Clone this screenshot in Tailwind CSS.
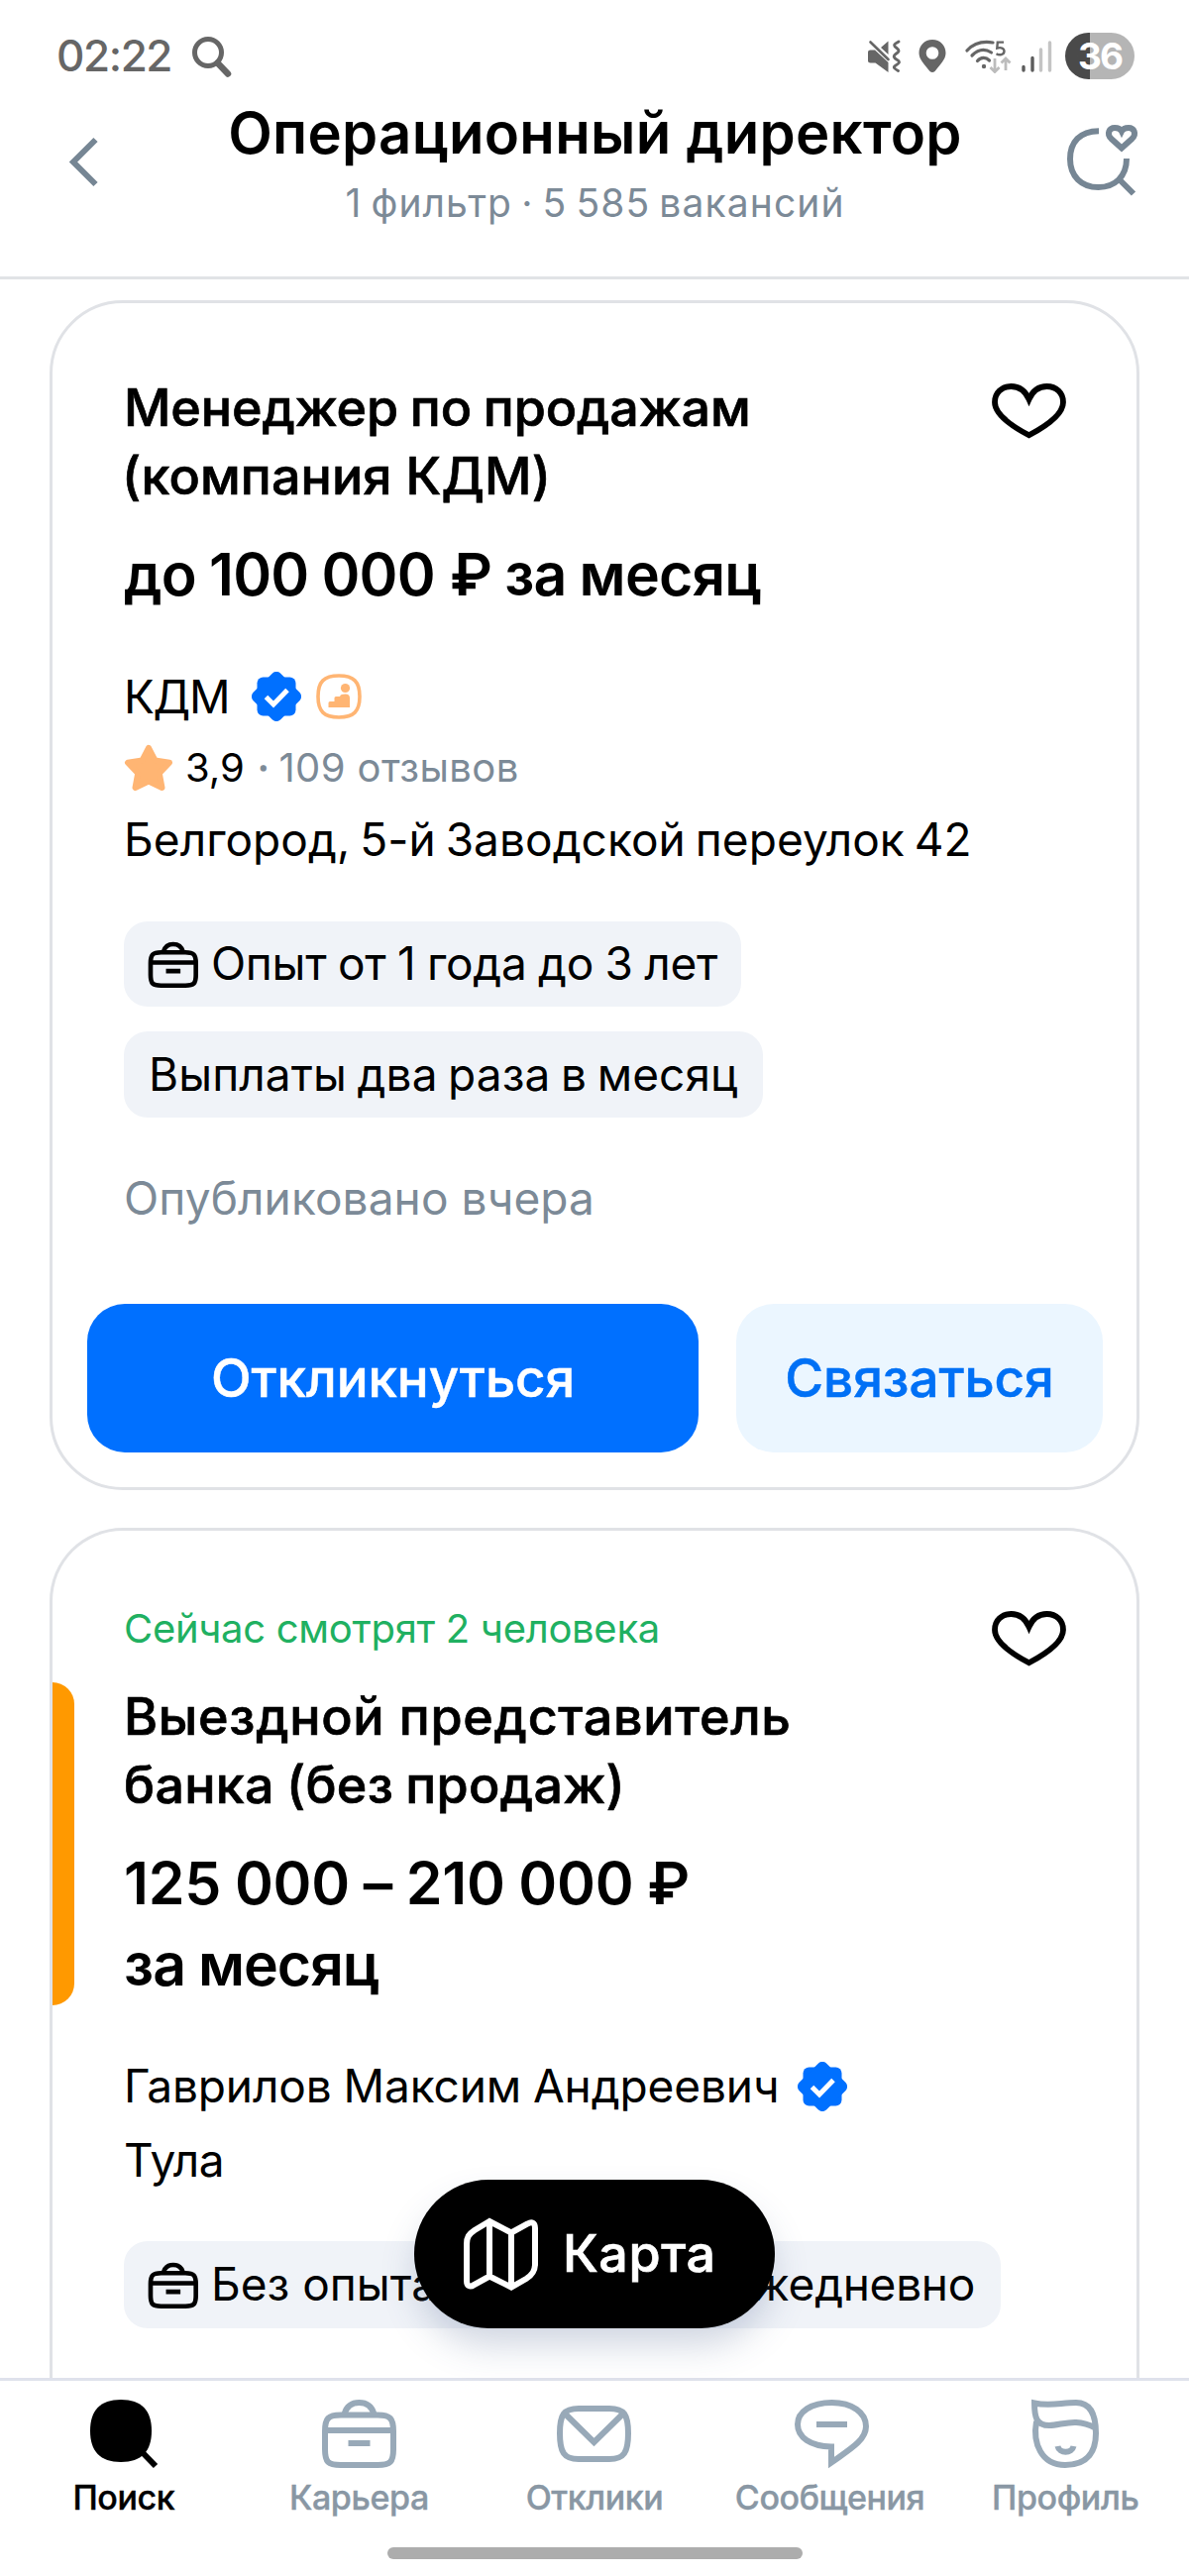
<!DOCTYPE html>
<html lang="ru">
<head>
<meta charset="utf-8">
<title>Операционный директор — вакансии</title>
<script src="https://cdn.jsdelivr.net/npm/@tailwindcss/browser@4"></script>
</head>
<body class="bg-white">
<svg class="hidden">
  <symbol id="briefcase" viewBox="0 0 80 80"><g fill="none" stroke="currentColor"><path d="M25.500 20.500C28 12 33 9 40.500 9S53 12 55.500 20.500"/><path d="M6 38C6 25 9 21.500 22 21.500H59C72 21.500 75 25 75 38V56C75 69 72 72 59 72H22C9 72 6 69 6 56ZM6 37H75M29.500 50H51.500"/></g></symbol>
  <symbol id="heart" viewBox="0 0 75 56"><path d="M37.500 16C34 8 28 3 19.500 3C10 3 3 9.500 3 19C3 31 18 42 37.500 52.300C57 42 72 31 72 19C72 9.500 65 3 55.500 3C47 3 41 8 37.500 16Z" fill="none" stroke="currentColor" stroke-width="5.800"/></symbol>
  <symbol id="verified" viewBox="0 0 50 50"><g fill="#0070ff"><rect x="5.500" y="5.500" width="39" height="39" rx="6"/><rect x="5.500" y="5.500" width="39" height="39" rx="6" transform="rotate(45 25 25)"/></g><path d="M14.500 25.500L22 33L36 18.500" fill="none" stroke="#fff" stroke-width="5"/></symbol>
</svg>

<div class="relative flex h-[2600px] w-[1200px] flex-col overflow-hidden bg-white font-['Inter',sans-serif] text-black">

  <!-- Status bar -->
  <div class="mt-[33px] flex h-[47px] shrink-0 items-center pr-[55px] pl-[57px] text-[#666]">
    <span class="text-[44px] leading-[47px] font-medium tracking-[-1.4px]">02:22</span>
    <svg class="ml-[21px] h-[42px] w-[40px]" viewBox="0 0 40 42" fill="none" stroke="currentColor"><circle cx="16" cy="17" r="13.500" stroke-width="5"/><path d="M25.500 27.500L36 38.500" stroke-width="6.500" stroke-linecap="round"/></svg>
    <div class="ml-auto flex items-center">
      <svg class="h-[33px] w-[33px]" viewBox="0 0 33 33"><path d="M0 12.500Q0 10.500 2.500 10.500H7L20.500 23V33L7.500 23.500H2.500Q0 23.500 0 21.500ZM13 8L20.500 1.500V15Z" fill="currentColor"/><path d="M2.500 2.500L20.500 20" stroke="currentColor" stroke-width="2.600" stroke-linecap="round"/><path d="M31 2C25.500 5 25.500 6 29 8.500S31 12.500 28 14.500S26 18.500 29.500 20.500S31.500 24 28 26S27 29.500 30.500 31.500" fill="none" stroke="currentColor" stroke-width="2.800" stroke-linecap="round"/></svg>
      <svg class="ml-[18px] h-[33px] w-[28px]" viewBox="0 0 28 33"><path fill-rule="evenodd" fill="currentColor" d="M14 0C22 0 27.500 6 27.500 13.500C27.500 20 22 25 16.500 32Q14 34 11.500 32C6 25 .5 20 .5 13.500C.5 6 6 0 14 0ZM14 7.200A6.300 6.300 0 1 0 14 19.800A6.300 6.300 0 1 0 14 7.200Z"/></svg>
      <svg class="ml-[19px] h-[34px] w-[48px]" viewBox="0 0 48 34"><g fill="none" stroke="currentColor" stroke-width="3.200" stroke-linecap="round"><path d="M2 11C8 4.500 16 1 28 3"/><path d="M7 16C13 10 20 9 26.500 13"/><path d="M12.500 21.500C16 17.500 21 17.500 24.500 21"/></g><circle cx="19" cy="27" r="2.200" fill="currentColor"/><path d="M39 2.600H32.800L32.300 8.600C36 7.400 39.500 8.500 39.500 11.800C39.500 15.500 34.500 16 31.500 14.200" fill="none" stroke="currentColor" stroke-width="2.400"/><path d="M30 19V32M25.500 28L30 32.500L34.500 28M41 31V19M36.500 23.500L41 19L45.500 23.500" fill="none" stroke="#bcbcbc" stroke-width="2.800"/></svg>
      <svg class="ml-[9px] h-[34px] w-[31px]" viewBox="0 0 31 34" fill="none" stroke-width="3.400" stroke-linecap="round"><path d="M2 27.500V31M11 18.500V31" stroke="#5c5c5c"/><path d="M19.500 10V31M28.500 3V31" stroke="#c4c4c4"/></svg>
      <div class="ml-[13px] flex h-[47px] w-[70px] items-center justify-center overflow-hidden rounded-full bg-linear-to-r from-[#4a4a4a] from-[36%] to-[#b5b5b5] to-[36%] text-[37px] leading-[47px] font-bold tracking-[-2px] text-white">36</div>
    </div>
  </div>

  <!-- Header -->
  <header class="flex h-[202px] shrink-0 items-start justify-between border-b-[3px] border-[#e1e3e6] pr-[50px] pl-[69px]">
    <svg class="mt-[58px] h-[51px] w-[31px] text-[#768694]" viewBox="0 0 31 51" fill="none" stroke="currentColor" stroke-width="6"><path d="M27.500 3L5 25.500L27.500 48"/></svg>
    <div class="mt-[16px] ml-[24px] text-center">
      <h1 class="text-[58px] leading-[76px] font-semibold tracking-[0.3px]">Операционный директор</h1>
      <p class="text-[39px] leading-[66px] tracking-[1.1px] [word-spacing:-3px] text-[#7c8a97]">1 фильтр · 5 585 вакансий</p>
    </div>
    <svg class="mt-[46px] h-[72px] w-[73px] text-[#768694]" viewBox="0 0 73 72" fill="none" stroke="currentColor" stroke-width="6"><path d="M32 6.200C13 6.200 3 17.500 3 34.500C3 52 14.500 63 31.500 63S60 52 60 34"/><path d="M51 53.500L67 69.500"/><path d="M55 23.500L44.500 14C39.500 9 42.500 3 48 3C51.500 3 54 4.500 55 6.500C56 4.500 58.500 3 62 3C67.500 3 70.500 9 65.500 14Z"/></svg>
  </header>

  <main class="relative flex min-h-0 flex-1 flex-col px-[50px]">

    <article class="mt-[21px] h-[1201px] w-[1100px] shrink-0 rounded-[74px] border-[3px] border-[#e0e2e6] pt-[71px]">
      <div class="flex flex-col pl-[72px]">
        <div class="flex items-start justify-between pr-[71px]">
          <h2 class="text-[52px] leading-[69px] font-medium [-webkit-text-stroke:0.7px]"><span class="tracking-[-0.1px] [word-spacing:-2px]">Менеджер по продажам</span><br><span class="-ml-[2px] tracking-[0.1px]">(компания КДМ)</span></h2>
          <svg class="mt-[10px] h-[56px] w-[75px]"><use href="#heart"/></svg>
        </div>
        <p class="mt-[24px] text-[59px] leading-[82px] font-semibold tracking-[-0.8px] [word-spacing:-1px]">до 100 000 <span class="ml-[2px]">₽</span> за месяц</p>
        <div class="mt-[46px] flex h-[72px] items-center">
          <span class="text-[46px] leading-[72px] tracking-[-1.3px]">КДМ</span>
          <svg class="ml-[23px] h-[50px] w-[50px]"><use href="#verified"/></svg>
          <svg class="ml-[15px] h-[46px] w-[46px] text-[#ffb573]" viewBox="0 0 46 46"><path d="M23 2C38 2 44 8 44 23S38 44 23 44S2 38 2 23S8 2 23 2Z" fill="none" stroke="currentColor" stroke-width="3.600"/><circle cx="29.500" cy="14.500" r="4.600" fill="currentColor"/><path d="M12.500 34V29.500Q12.500 28 14 28H18.500V24.500Q18.500 23 20 23H24C24.500 21.200 26.500 20.500 29.500 20.500S34 22 34 24.500V34Z" fill="currentColor"/></svg>
        </div>
        <div class="flex h-[72px] items-center text-[40px] leading-[72px]">
          <svg class="h-[50px] w-[50px] text-[#ffb573]" viewBox="0 0 50 50"><path d="M25 5L31.500 17.500L46 19.800L35.800 30.500L38.500 45L25 38.500L11.500 45L14.200 30.500L4 19.800L18.500 17.500Z" fill="currentColor" stroke="currentColor" stroke-width="6" stroke-linejoin="round"/></svg>
          <span class="ml-[12px]">3,9</span>
          <span class="ml-[13px] text-[#7c8a97] [-webkit-text-stroke:1px]">·</span>
          <span class="ml-[10px] tracking-[0.4px] text-[#7c8a97]">109 отзывов</span>
        </div>
        <p class="text-[46px] leading-[72px] tracking-[0.05px] [word-spacing:-3px]">Белгород, 5-й Заводской переулок 42</p>
        <div class="mt-[47px] flex flex-col items-start gap-[25px] text-[46px]">
          <span class="flex h-[86px] w-[623px] items-center rounded-[24px] bg-[#f0f3f8] pb-[2px] pl-[23px] tracking-[-0.3px] [word-spacing:-1px]"><svg class="mt-[2px] mr-[12px] h-[53px] w-[53px] stroke-[7]"><use href="#briefcase"/></svg>Опыт от 1 года до 3 лет</span>
          <span class="flex h-[87px] w-[645px] items-center rounded-[24px] bg-[#f0f3f8] pl-[25px] tracking-[0.1px] [word-spacing:-2.5px]">Выплаты два раза в месяц</span>
        </div>
        <p class="mt-[51px] text-[46px] leading-[60px] tracking-[0.1px] text-[#7c8a97]">Опубликовано вчера</p>
      </div>
      <div class="mt-[77px] flex h-[150px] gap-[38px] pr-[34px] pl-[35px] text-[53px] font-medium tracking-[-0.1px] [-webkit-text-stroke:0.5px]">
        <button class="flex-1 rounded-[38px] bg-[#0070ff] pt-[2px] text-white">Откликнуться</button>
        <button class="w-[370px] rounded-[38px] bg-[#ebf6ff] pt-[2px] text-[#0070f5]">Связаться</button>
      </div>
    </article>

    <article class="mt-[38px] min-h-0 w-[1100px] flex-1 overflow-hidden rounded-t-[74px] border-[3px] border-b-0 border-[#e0e2e6] pt-[69px]">
      <div class="flex h-[60px] items-start justify-between pr-[71px] pl-[72px]">
        <p class="text-[40px] leading-[60px] tracking-[-0.3px] text-[#20b061]">Сейчас смотрят 2 человека</p>
        <svg class="mt-[12px] h-[56px] w-[75px]"><use href="#heart"/></svg>
      </div>
      <div class="mt-[24px] flex">
        <div class="w-[22px] shrink-0 rounded-r-[22px] bg-[#ff9900]"></div>
        <div class="pl-[50px]">
          <h2 class="text-[52px] leading-[69px] font-medium [-webkit-text-stroke:0.7px]"><span class="tracking-[0.7px]">Выездной представитель</span><br><span class="tracking-[0.3px] [word-spacing:-2px]">банка (без продаж)</span></h2>
          <p class="mt-[24px] text-[59px] leading-[82px] font-semibold tracking-[-0.2px] [word-spacing:-1px]">125 000 – 210 000 ₽<br><span class="tracking-[-1px]">за месяц</span></p>
        </div>
      </div>
      <div class="mt-[44px] pl-[72px] text-[46px] leading-[75px]">
        <div class="flex items-center">
          <span class="tracking-[-0.1px] [word-spacing:-1px]">Гаврилов Максим Андреевич</span>
          <svg class="ml-[19px] h-[50px] w-[50px]"><use href="#verified"/></svg>
        </div>
        <p class="tracking-[-0.4px]">Тула</p>
        <div class="mt-[44px] flex h-[88px] w-[885px] items-center justify-between rounded-[24px] bg-[#f0f3f8] pr-[26px] pb-[2px] pl-[23px]">
          <span class="flex items-center"><svg class="mt-[2px] mr-[12px] h-[53px] w-[53px] stroke-[7]"><use href="#briefcase"/></svg>Без опыта</span>
          <span class="tracking-[-0.3px]">Ежедневно</span>
        </div>
      </div>
    </article>

    <!-- Floating map button -->
    <button class="absolute bottom-[50px] left-[418px] flex h-[150px] w-[364px] items-center rounded-full bg-black pl-[49px] text-[52px] font-medium tracking-[0.6px] text-white shadow-[0_20px_36px_-4px_rgba(60,85,130,0.25)] [-webkit-text-stroke:0.7px]">
      <svg class="h-[75px] w-[77px]" viewBox="0 0 77 75" fill="none" stroke="currentColor" stroke-width="6"><path d="M27 4L12 13C6 17 4 20 4 27V64C4 69.500 7.500 71 11.500 68L27 59.500L49 70.500L64 62C70.500 58 73 54 73 47V11C73 5 69.500 4 65.500 6.500L49 15.500ZM27 4V59.500M49 15.500V70.500"/></svg>
      <span class="ml-[24px]">Карта</span>
    </button>
  </main>

  <!-- Tab bar -->
  <nav class="flex h-[200px] shrink-0 flex-col items-center border-t-[3px] border-[#dfe2ec] bg-white px-[6px] pt-[13px]">
    <div class="flex w-full text-[34px] leading-[48px] font-medium tracking-[-0.4px] text-[#8997a4] [-webkit-text-stroke:0.4px]">
      <div class="flex flex-1 flex-col items-center text-black"><svg class="mb-px h-[80px] w-[80px]" viewBox="0 0 80 80"><path d="M37 6C58 6 68 17 68 37.500S58 69 37 69S6 58 6 37.500S16 6 37 6Z" fill="currentColor"/><path d="M55 55.500L72 73" stroke="currentColor" stroke-width="6"/></svg>Поиск</div>
      <div class="flex flex-1 flex-col items-center"><svg class="mb-px h-[80px] w-[80px] stroke-[6] text-[#98a9b8]"><use href="#briefcase"/></svg>Карьера</div>
      <div class="flex flex-1 flex-col items-center"><svg class="mb-px h-[80px] w-[80px] text-[#98a9b8]" viewBox="0 0 80 80" fill="none" stroke="currentColor" stroke-width="6"><path d="M5 40C5 21 9 15 24 15H55C70 15 74 21 74 40S70 66 55 66H24C9 66 5 59 5 40ZM10 20L39.500 49L69 20"/></svg>Отклики</div>
      <div class="flex flex-1 flex-col items-center"><svg class="mb-px h-[80px] w-[80px] text-[#98a9b8]" viewBox="0 0 80 80" fill="none" stroke="currentColor" stroke-width="6"><path d="M41 53.500C20 53 7 44 7 31C7 18 21 9 41.500 9S76 19 76 33C76 47 60 56 41 69.500ZM26 31H57"/></svg>Сообщения</div>
      <div class="flex flex-1 flex-col items-center"><svg class="mb-px h-[80px] w-[80px] text-[#98a9b8]" viewBox="0 0 80 80" fill="none" stroke="currentColor" stroke-width="6"><path d="M11 28C7 50 16 72 40 72S71 57 71 40C71 22 66 9 51 9C36 9 25 13 9 9.500C9 24 11 32 24 32C37 32 50 23.500 70.500 34.500"/><path d="M32.500 53C34 60.500 47 60.500 48.500 53"/></svg>Профиль</div>
    </div>
    <div class="mt-[26px] h-[12px] w-[419px] rounded-full bg-[#adadad]"></div>
  </nav>
</div>
</body>
</html>
